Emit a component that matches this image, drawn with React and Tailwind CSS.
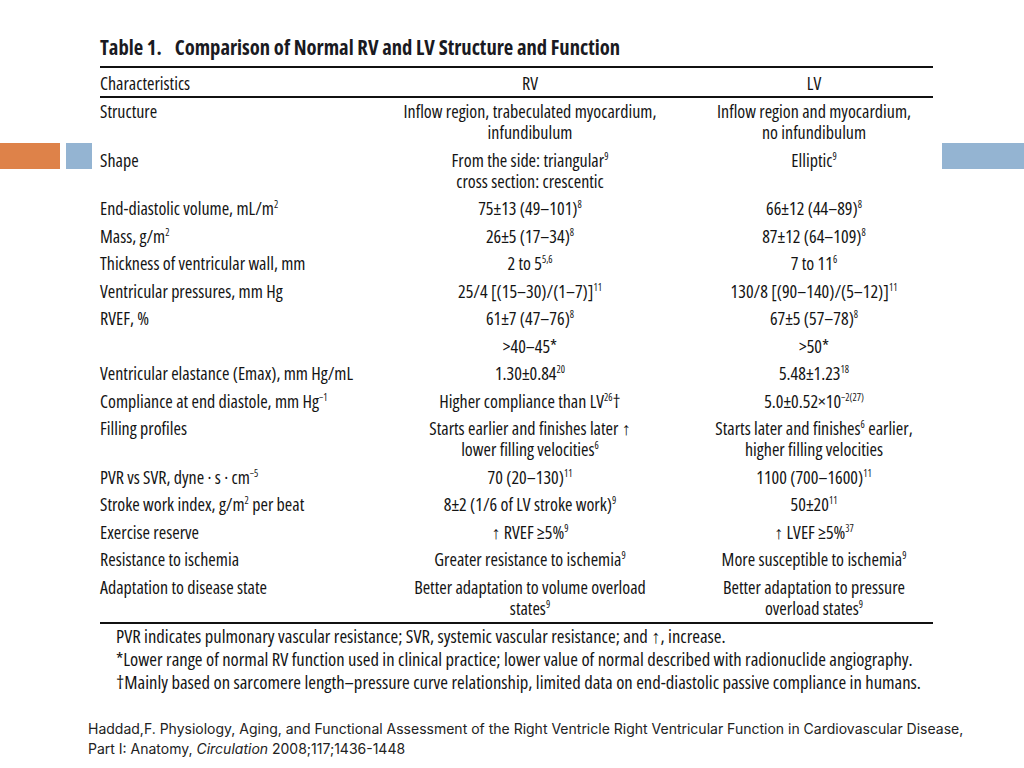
import React from "react";

const S = ({ children }) => (
  <sup className="text-[10px] top-[-0.7em]">{children}</sup>
);

const rows = [
  [
    "Structure",
    <>Inflow region, trabeculated myocardium,<br />infundibulum</>,
    <>Inflow region and myocardium,<br />no infundibulum</>,
  ],
  [
    "Shape",
    <>From the side: triangular<S>9</S><br />cross section: crescentic</>,
    <>Elliptic<S>9</S></>,
  ],
  [
    <>End-diastolic volume, mL/m<S>2</S></>,
    <>75±13 (49–101)<S>8</S></>,
    <>66±12 (44–89)<S>8</S></>,
  ],
  [
    <>Mass, g/m<S>2</S></>,
    <>26±5 (17–34)<S>8</S></>,
    <>87±12 (64–109)<S>8</S></>,
  ],
  [
    "Thickness of ventricular wall, mm",
    <>2 to 5<S>5,6</S></>,
    <>7 to 11<S>6</S></>,
  ],
  [
    "Ventricular pressures, mm Hg",
    <>25/4 [(15–30)/(1–7)]<S>11</S></>,
    <>130/8 [(90–140)/(5–12)]<S>11</S></>,
  ],
  ["RVEF, %", <>61±7 (47–76)<S>8</S></>, <>67±5 (57–78)<S>8</S></>],
  ["", <>&gt;40–45*</>, <>&gt;50*</>],
  [
    "Ventricular elastance (Emax), mm Hg/mL",
    <>1.30±0.84<S>20</S></>,
    <>5.48±1.23<S>18</S></>,
  ],
  [
    <>Compliance at end diastole, mm Hg<S>−1</S></>,
    <>Higher compliance than LV<S>26</S>†</>,
    <>5.0±0.52×10<S>−2(27)</S></>,
  ],
  [
    "Filling profiles",
    <>Starts earlier and finishes later ↑<br />lower filling velocities<S>6</S></>,
    <>Starts later and finishes<S>6</S> earlier,<br />higher filling velocities</>,
  ],
  [
    <>PVR vs SVR, dyne · s · cm<S>−5</S></>,
    <>70 (20–130)<S>11</S></>,
    <>1100 (700–1600)<S>11</S></>,
  ],
  [
    <>Stroke work index, g/m<S>2</S> per beat</>,
    <>8±2 (1/6 of LV stroke work)<S>9</S></>,
    <>50±20<S>11</S></>,
  ],
  ["Exercise reserve", <>↑ RVEF ≥5%<S>9</S></>, <>↑ LVEF ≥5%<S>37</S></>],
  [
    "Resistance to ischemia",
    <>Greater resistance to ischemia<S>9</S></>,
    <>More susceptible to ischemia<S>9</S></>,
  ],
  [
    "Adaptation to disease state",
    <>Better adaptation to volume overload<br />states<S>9</S></>,
    <>Better adaptation to pressure<br />overload states<S>9</S></>,
  ],
];

export default function App() {
  return (
    <div className="w-[1024px] h-[768px] bg-white relative overflow-hidden text-[#141414]">
      <div className="absolute left-0 top-[143px] w-[60px] h-[26px] bg-[#de8249]" />
      <div className="absolute left-[66px] top-[143px] w-[26px] h-[26px] bg-[#94b4d2]" />
      <div className="absolute left-[942px] top-[143px] w-[82px] h-[26px] bg-[#94b4d2]" />

      <div className="pl-[100px] pt-[35px] font-['Open_Sans',sans-serif] [font-stretch:75%] font-[450]">
        <div className="w-[833px]">
          <div className="text-[20.6px] font-bold leading-[24px] text-[#1a1a22] h-[31px] whitespace-nowrap">
            <span className="mr-[13px]">Table 1.</span>Comparison of Normal RV and LV Structure and Function
          </div>
          <div className="border-t-2 border-[#111]" />
          <div className="grid grid-cols-[290px_280px_263px] text-[18px] leading-[21px] pt-[5px] pb-[2px] whitespace-nowrap">
            <div>Characteristics</div>
            <div className="text-center">RV</div>
            <div className="text-center pl-[25px]">LV</div>
          </div>
          <div className="border-t-2 border-[#111]" />
          {rows.map((r, i) => (
            <div
              key={i}
              className="grid grid-cols-[290px_280px_263px] text-[18px] leading-[21px] py-[3.25px] whitespace-nowrap"
            >
              <div>{r[0]}</div>
              <div className="text-center">{r[1]}</div>
              <div className="text-center pl-[25px]">{r[2]}</div>
            </div>
          ))}
          <div className="border-t-2 border-[#111]" />
          <div className="pl-[16px] text-[18.6px] leading-[23px] whitespace-nowrap">
            <div>PVR indicates pulmonary vascular resistance; SVR, systemic vascular resistance; and ↑, increase.</div>
            <div>*Lower range of normal RV function used in clinical practice; lower value of normal described with radionuclide angiography.</div>
            <div>†Mainly based on sarcomere length–pressure curve relationship, limited data on end-diastolic passive compliance in humans.</div>
          </div>
        </div>
      </div>

      <div className="absolute left-[88px] top-[719px] text-[14px] leading-[20px] text-[#222] font-['Inter',sans-serif] whitespace-nowrap">
        <div>Haddad,F. Physiology, Aging, and Functional Assessment of the Right Ventricle Right Ventricular Function in Cardiovascular Disease,</div>
        <div>Part I: Anatomy, <i>Circulation</i> 2008;117;1436-1448</div>
      </div>
    </div>
  );
}
